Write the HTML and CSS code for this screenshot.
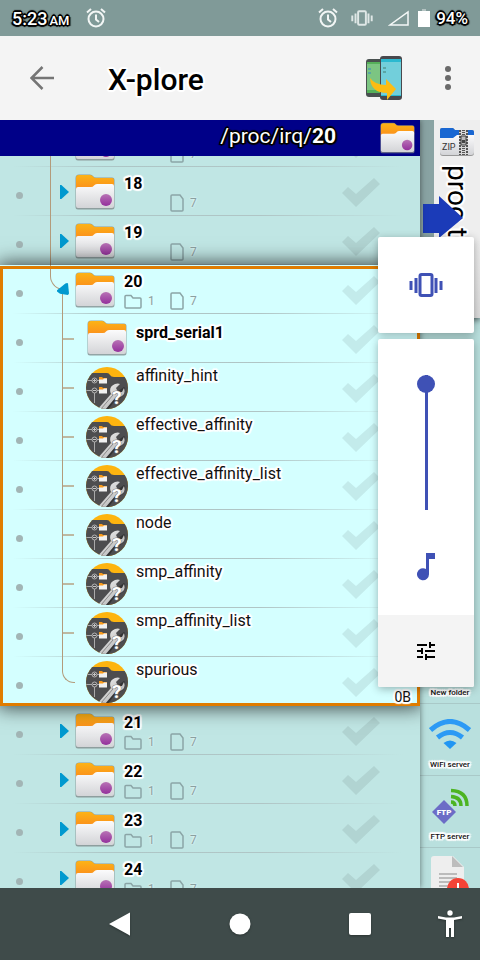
FILE: index.html
```html
<!DOCTYPE html>
<html lang="en">
<head>
<meta charset="utf-8">
<meta name="viewport" content="width=device-width, initial-scale=1">
<title>X-plore</title>
<link rel="stylesheet" href="styles.css">
</head>
<body>
<svg class="sprite" aria-hidden="true">
  <defs>
    <linearGradient id="g-orange" x1="0" y1="0" x2="0" y2="1"><stop offset="0" stop-color="#fcb316"/><stop offset="1" stop-color="#fb8c1c"/></linearGradient>
    <linearGradient id="g-paper" x1="0" y1="0" x2="0" y2="1"><stop offset="0" stop-color="#fbfbfc"/><stop offset="1" stop-color="#d3d4d7"/></linearGradient>
    <linearGradient id="g-purple" x1="0" y1="0" x2="0" y2="1"><stop offset="0" stop-color="#b873b5"/><stop offset="1" stop-color="#94309c"/></linearGradient>
    <linearGradient id="g-wrench" x1="0" y1="0" x2="1" y2="1"><stop offset="0" stop-color="#fafafa"/><stop offset="1" stop-color="#a5a5a5"/></linearGradient>
    <clipPath id="c-round"><circle cx="21" cy="21" r="21"/></clipPath>
  </defs>
  <symbol id="folder" viewBox="0 0 40 36">
    <path d="M.5 34V4Q.5 .5 4 .5H15Q17 .5 18 2Q19 3.500 21 3.500H37Q39.500 3.500 39.500 6V33Q39.500 35.500 37 35.500H3Q.5 35.500 .5 33Z" fill="#7d8587" opacity=".75"/>
    <path d="M1 16V4Q1 1 4 1H15Q17 1 18 2.500Q19 4 21 4H37Q39 4 39 6V14Z" fill="url(#g-orange)"/>
    <path d="M1 15Q1 13 3 13H16Q18 13 19 11.500Q20 10 22 10H37Q39 10 39 12V32Q39 34 37 34H3Q1 34 1 32Z" fill="url(#g-paper)"/>
    <circle cx="31" cy="26" r="6" fill="url(#g-purple)"/>
  </symbol>
  <symbol id="sysfile" viewBox="0 0 42 42">
    <g clip-path="url(#c-round)">
      <rect width="42" height="42" fill="#fdb40f"/>
      <path d="M0 6H21Q23 6 24 8Q25 10 28 10H42V42H0Z" fill="#4d4d4f"/>
      <path d="M0 13.500H13M0 23.500H13M8.500 26V36" stroke="#a9a9a9" fill="none"/>
      <circle cx="8.500" cy="13.500" r="2.500" fill="#4d4d4f" stroke="#b5b5b5"/>
      <circle cx="8.500" cy="23.500" r="2.500" fill="#4d4d4f" stroke="#b5b5b5"/>
      <path d="M7 13.500H10M8.500 12V15M7 23.500H10" stroke="#c5c5c5"/>
      <path d="M13 10H16L17 11H21V13H13ZM13 20H16L17 21H21V23H13Z" fill="#f99b1c"/>
      <path d="M13 12.500H17L18 11.500H21V16.500H13ZM13 22.500H17L18 21.500H21V26.500H13Z" fill="#f1f1f1"/>
      <path d="M38 20L39 21Q40 28 34 31L30 32L22 43H15L28 27Z" fill="#242424" opacity=".6"/>
      <path d="M11 43L25 27Q22 20 29 17Q32 16 34 17L30 21L32 25H36L38 21Q40 27 36 29Q33 31 30 30L19 43Z" fill="url(#g-wrench)"/>
      <path d="M15 42L27 28" stroke="#888"/>
      <text x="26" y="37" font-family="Roboto, sans-serif" font-size="19" font-weight="700" fill="#fff" stroke="#777" stroke-width="1" paint-order="stroke">?</text>
    </g>
  </symbol>
  <symbol id="check" viewBox="0 0 40 32"><path d="M1 17L7 11L15 18L33 2L39 8L15 31Z" fill="#000" opacity=".08"/></symbol>
  <symbol id="mini-folder" viewBox="0 0 18 15"><path d="M1 2.500Q1 1.500 2 1.500H7L9 4H16Q17 4 17 5V13Q17 14 16 14H2Q1 14 1 13Z"/></symbol>
  <symbol id="mini-file" viewBox="0 0 14 18"><path d="M1 2Q1 1 2 1H10L13 5V16Q13 17 12 17H2Q1 17 1 16Z"/></symbol>
  <symbol id="alarm" viewBox="0 0 20 20">
    <circle cx="10" cy="11" r="7.500" fill="none" stroke="#f2f6f5" stroke-width="2"/>
    <path d="M10 6.500V11.500L13 14M1 4.500L5 1M19 4.500L15 1" fill="none" stroke="#f2f6f5" stroke-width="2"/>
  </symbol>
  <symbol id="vibrate" viewBox="0 0 34 24">
    <rect x="11" y="1.500" width="12" height="21" rx="1.500" fill="none" stroke="currentColor" stroke-width="3"/>
    <path d="M7 5V20M27 5V20" stroke="currentColor" stroke-width="3"/>
    <path d="M2 8V17M32 8V17" stroke="currentColor" stroke-width="3"/>
  </symbol>
</svg>

<header class="status">
  <span class="clock">5:23<small>AM</small></span>
  <svg class="ic20"><use href="#alarm"/></svg>
  <span class="grow"></span>
  <svg class="ic20"><use href="#alarm"/></svg>
  <svg class="status-vibrate"><use href="#vibrate"/></svg>
  <svg class="signal" viewBox="0 0 21 16"><path d="M2 15H20V2Z" fill="none" stroke="#f4f8f7" stroke-width="1.500"/></svg>
  <svg class="battery" viewBox="0 0 12 18"><path d="M4 0H8V2H4Z" fill="#b4c3c2"/><path d="M0 2H12V18H0Z" fill="#fff"/></svg>
  <span class="percent">94%</span>
</header>

<div class="toolbar">
  <button class="back" aria-label="Back"><svg viewBox="0 0 24 24"><path d="M24 12H2M12.500 1L1.500 12L12.500 23" fill="none" stroke="#757575" stroke-width="2.500"/></svg></button>
  <h1>X-plore</h1>
  <button class="swap" aria-label="Transfer"><svg viewBox="0 0 38 46">
    <rect x="1" y="4" width="20" height="38" rx="3" fill="#48504f"/><rect x="2" y="7" width="18" height="31" fill="#55b05a"/><rect x="2" y="9" width="18" height="26" fill="#7cc582"/>
    <rect x="15" y="1" width="22" height="44" rx="3" fill="#48484d"/><rect x="16" y="4" width="20" height="37" fill="#2bb9d0"/><rect x="16" y="7" width="20" height="33" fill="#72cfdb"/>
    <path d="M3 14H6M3 18H6M18 13H21M18 17H21" stroke="#5aa6a5" stroke-width="2"/>
    <path d="M5 23Q10 30 21 30V24L31 34L22 45V38Q6 38 5 23Z" fill="#fdbc12"/>
  </svg></button>
  <button class="more" aria-label="More"><svg viewBox="0 0 6 24"><circle cx="3" cy="3" r="3"/><circle cx="3" cy="12" r="3"/><circle cx="3" cy="21" r="3"/></svg></button>
</div>

<main class="content">
  <section class="pane">
    <div class="path"><span>/proc/irq/<b>20</b></span><svg class="path-icon"><use href="#folder"/></svg></div>
    <div class="viewport">
      <ul class="list" id="list"></ul>
    </div>
  </section>

  <aside class="side">
    <div class="tab">
      <svg class="zip" viewBox="0 0 34 30">
        <path d="M0 26V3Q0 1 2 1H13L15 3H32Q34 3 34 5V26Q34 29 31 29H3Q0 29 0 26Z" fill="#999"/>
        <path d="M0 14V3Q0 1 2 1H13L15 3H32Q34 3 34 5V14Z" fill="#1967d2"/>
        <path d="M0 11H13L17 8H34V25Q34 28 31 28H3Q0 28 0 25Z" fill="url(#g-paper)"/>
        <path d="M19 3H28V28H19Z" fill="#d8d8d8"/>
        <path d="M20 3V28M27 3V28" stroke="#555" stroke-width="2" stroke-dasharray="2 1"/>
        <path d="M23.500 3V28" stroke="#555" stroke-width="3" stroke-dasharray="1 1"/>
        <path d="M21 9H26V18H21Z" fill="#bbb" stroke="#444"/><path d="M22 13H25V16H22Z" fill="#444"/>
        <text x="2" y="23" font-family="Roboto, sans-serif" font-size="9" fill="#333">ZIP</text>
      </svg>
      <span class="tab-name">proc.tar</span>
      <svg class="arrow" viewBox="0 0 40 42"><path d="M0 8H16V0L40 22L16 42V37H0Z" fill="#1b3bb8"/></svg>
    </div>
    <div class="tools">
      <button class="tool">New folder</button>
      <button class="tool"><svg class="wifi" viewBox="0 0 42 30"><path d="M21 30L14.500 24Q21 19 27.500 24Z" fill="#2196f3"/><path d="M8.500 18.500Q21 8.500 33.500 18.500M1.500 11Q21 -6 40.500 11" fill="none" stroke="#2c9af5" stroke-width="5"/></svg>WiFi server</button>
      <button class="tool"><svg class="ftp" viewBox="0 0 38 36">
        <path d="M13 12L25 24L13 36L1 24Z" fill="#6c6cc6"/>
        <path d="M20 14Q24 14 24 18M20 8.500Q30 9 30 18M20 2.500Q36 3 36 18" fill="none" stroke="#4cb422" stroke-width="3.500"/>
        <text x="13" y="27" text-anchor="middle" font-family="Roboto, sans-serif" font-size="8" font-weight="900" fill="#fff">FTP</text>
      </svg>FTP server</button>
      <button class="tool" aria-label="Log"><svg class="log" viewBox="0 0 38 48"><path d="M3 0H22L33 11V48H3Q0 48 0 45V3Q0 0 3 0Z" fill="#eee"/><path d="M21 0L32 11H21Z" fill="#bdbdbd"/><path d="M8 18H26M8 22H26M8 26H26M8 30H18" stroke="#bbb" stroke-width="2"/><circle cx="27" cy="33" r="11" fill="#f44336"/><path d="M27 27V34M27 37V40" stroke="#fff" stroke-width="2"/></svg></button>
    </div>
  </aside>
</main>

<nav class="nav">
  <button aria-label="Back"><svg viewBox="0 0 24 24"><path d="M1 12L21 1Q22 0 22 1V23Q22 24 21 23Z"/></svg></button>
  <button aria-label="Home"><svg viewBox="0 0 24 24"><circle cx="12" cy="12" r="10.500"/></svg></button>
  <button aria-label="Recent"><svg viewBox="0 0 24 24"><rect x="1" y="1" width="22" height="22" rx="2"/></svg></button>
  <button class="access" aria-label="Accessibility"><svg viewBox="0 0 24 28"><circle cx="12" cy="3" r="2.700"/><path d="M0 6L8 7.500H16L24 6V8.500L16 10V27H13V18H11V27H8V10L0 8.500Z"/></svg></button>
</nav>

<div class="volume">
  <button class="mode" aria-label="Vibrate"><svg><use href="#vibrate"/></svg></button>
  <div class="sheet">
    <input class="slider" type="range" min="0" max="100" value="100" aria-label="Media volume">
    <svg class="note" viewBox="0 0 18 28"><path d="M9 0H18V6H12V21A6 6 0 1 1 9 16Z"/></svg>
    <button class="settings" aria-label="Settings"><svg viewBox="0 0 18 18"><path d="M0 3H10M13 3H18M13 0V6M0 9H6M5 6V12M8 9H18M0 15H6M9 12V18M9 15H18" fill="none" stroke="#000" stroke-width="2"/></svg></button>
  </div>
</div>
<script src="list.js"></script>
</body>
</html>
```
FILE: list.js
```js
const icon = (name, cls) => `<svg class="${cls}"><use href="#${name}"/></svg>`;
const tail = icon("check", "check");

function folderRow(name, dirs, state) {
  const sub = dirs ? `${icon("mini-folder", "mini-folder")}<span>${dirs}</span>` : "";
  return `<li class="row top ${state}"><i class="dot"></i><i class="twist"></i>${icon("folder", "folder")}
    <div class="label"><b>${name}</b><div class="counts"><div class="dirs">${sub}</div>${icon("mini-file", "mini-file")}<span>7</span></div></div>${tail}</li>`;
}

function childRow(name, isFolder) {
  const pic = isFolder ? icon("folder", "folder") : icon("sysfile", "sysfile");
  return `<li class="row child${isFolder ? " is-folder" : ""}"><i class="dot"></i><div class="pic">${pic}</div>
    <div class="label">${name}</div>${tail}</li>`;
}

const files = ["affinity_hint", "effective_affinity", "effective_affinity_list", "node", "smp_affinity", "smp_affinity_list", "spurious"];

document.getElementById("list").innerHTML =
  ["17", "18", "19"].map(n => folderRow(n, 0, "before")).join("") +
  `<li class="group"><ul class="list">${folderRow("20", 1, "open")}${childRow("sprd_serial1", true)}${files.map(f => childRow(f, false)).join("")}</ul><span class="size">0B</span></li>` +
  ["21", "22", "23", "24"].map(n => folderRow(n, 1, "")).join("");
```
FILE: styles.css
```css
* { box-sizing: border-box; }
:root {
  --halo: 1px 0 1px #fff, -1px 0 1px #fff, 0 1px 1px #fff, 0 -1px 1px #fff, 2px 1px 1px #fff, -2px 1px 1px #fff, 2px -1px 1px #fff, -2px -1px 1px #fff, 1px 2px 1px #fff, -1px 2px 1px #fff, 1px -2px 1px #fff, -1px -2px 1px #fff;
  --dark-halo: 1px 0 0 #000, -1px 0 0 #000, 0 1px 0 #000, 0 -1px 0 #000, 1px 1px 0 #000, -1px -1px 0 #000, 1px -1px 0 #000, -1px 1px 0 #000, 2px 1px 1px #000, -2px 1px 1px #000, 0 2px 1px #000, 0 -2px 1px #000;
}
body {
  margin: 0;
  height: 100vh;
  display: flex;
  flex-direction: column;
  position: relative;
  overflow: hidden;
  font-family: Roboto, "Liberation Sans", sans-serif;
  color: #111;
}
button { border: 0; padding: 0; background: none; font: inherit; color: inherit; }
ul { list-style: none; margin: 0; padding: 0; }
svg { display: block; flex: none; }
svg text { text-shadow: none; }
.sprite { position: absolute; width: 0; height: 0; }
.grow { flex: 1; }

.status {
  flex: 0 0 36px;
  display: flex;
  align-items: center;
  padding: 0 12px;
  background: #809a98;
  color: #fff;
}
.clock, .percent { font-size: 18px; font-weight: 500; text-shadow: var(--dark-halo); }
.clock { display: flex; align-items: baseline; gap: 2px; width: 74px; }
.clock small { font-size: 13px; }
.ic20 { width: 20px; height: 20px; }
.status-vibrate { width: 22px; height: 16px; margin: 0 15px 0 13px; color: #dfe7e6; }
.signal { width: 21px; height: 16px; margin-right: 9px; }
.battery { width: 12px; height: 18px; margin-right: 6px; }
.percent { font-size: 17px; }

.toolbar {
  flex: 0 0 84px;
  display: flex;
  align-items: center;
  padding: 0 30px;
  background: #f4f4f4;
  position: relative;
  z-index: 2;
}
.back svg { width: 24px; height: 24px; }
.toolbar h1 {
  flex: 1;
  margin: 2px 0 0 54px;
  font-size: 30px;
  font-weight: 500;
  color: #000;
  text-shadow: var(--halo);
}
.swap { margin-right: 42px; }
.swap svg { width: 38px; height: 46px; }
.more svg { width: 6px; height: 24px; margin-right: -1px; fill: #6a6a6a; }

.content { flex: 1; min-height: 0; display: flex; }
.pane {
  flex: 1;
  min-width: 0;
  display: flex;
  flex-direction: column;
  background: #c0e6e4;
  position: relative;
  z-index: 1;
  box-shadow: 0 0 6px rgba(0, 0, 0, .5);
}
.path {
  flex: 0 0 36px;
  display: flex;
  align-items: center;
  justify-content: flex-end;
  gap: 44px;
  padding-right: 5px;
  background: #000088;
  color: #fff;
  font-size: 21px;
  text-shadow: var(--dark-halo);
}
.path span { padding-bottom: 4px; }
.path-icon { width: 35px; height: 32px; }
.viewport { flex: 1; min-height: 0; overflow: hidden; }
.viewport > .list { margin-top: -38px; }

.row {
  position: relative;
  height: 49px;
  display: flex;
  padding: 0 39px 0 16px;
  background: linear-gradient(90deg, transparent 3%, #adc6c6 25%, #b0c5c5 62%, transparent 96%) bottom / 100% 1px no-repeat;
}
.row > .check { width: 40px; height: 32px; margin-top: 9px; }
.dot { width: 7px; height: 7px; border-radius: 50%; background: #a2b5b5; margin-top: 25px; }
.twist {
  width: 9px;
  height: 14px;
  margin: 18px 6px 0 37px;
  background: #0099cf;
  clip-path: polygon(0 0, 15% 0, 100% 50%, 15% 100%, 0 100%);
}
.folder { width: 40px; height: 36px; margin-top: 7px; }
.label { flex: 1; margin-left: 9px; padding-top: 7px; font-size: 16px; line-height: 20px; text-shadow: var(--halo); white-space: nowrap; }
.top b { display: block; color: #000; }
.counts { display: flex; align-items: center; height: 18px; font-size: 12px; color: #8aa0a0; }
.counts svg { fill: none; stroke: #8ba5a6; stroke-width: 1.500; }
.dirs { width: 46px; display: flex; align-items: center; }
.counts span { margin-left: 6px; text-shadow: 0 0 2px #e8fafa, 0 0 2px #e8fafa; }
.mini-folder { width: 18px; height: 15px; }
.mini-file { width: 14px; height: 18px; }

.pic { width: 42px; margin-left: 63px; }
.child .folder { margin: 6px 0 0 1px; }
.sysfile { width: 42px; height: 42px; margin-top: 4px; }
.child .label { margin-left: 8px; padding-top: 3px; }
.child.is-folder .label { padding-top: 9px; font-weight: 700; color: #000; }

.row::before, .row::after { position: absolute; border: 0 solid #b39b7b; }
.before::before { content: ""; left: 50px; top: 0; bottom: 0; border-left-width: 1px; }
.open::before { content: ""; left: 50px; top: 0; width: 14px; height: 24px; border-left-width: 1px; border-bottom-width: 1px; border-bottom-left-radius: 14px; }
.open::after { content: ""; left: 62px; top: 28px; bottom: 0; border-left-width: 1px; }
.child::before { content: ""; left: 62px; top: 0; bottom: 0; border-left-width: 1px; }
.child::after { content: ""; left: 63px; top: 24px; width: 11px; border-top-width: 2px; border-color: #bdb9a2; }
.child:last-child::before { bottom: auto; width: 12px; height: 25px; border-bottom-width: 1px; border-bottom-left-radius: 12px; }
.child:last-child::after { content: none; }
.open .twist {
  width: 12px;
  height: 12px;
  margin: 18px 6px 0 34px;
  clip-path: polygon(0 60%, 70% 5%, 85% 0, 92% 5%, 100% 88%, 92% 100%, 25% 90%, 0 70%);
  z-index: 1;
}

.group { position: relative; z-index: 1; background: #d4ffff; box-shadow: 0 0 18px 2px rgba(0, 0, 0, .7); }
.group::after { content: ""; position: absolute; inset: 1px 0 0; border: 3px solid #e07c00; }
.size { position: absolute; right: 9px; bottom: 0; z-index: 1; font-size: 14px; line-height: 17px; text-shadow: var(--halo); }

.side { flex: 0 0 60px; display: flex; flex-direction: column; background: #b9e0de; overflow: hidden; }
.tab {
  flex: 0 0 198px;
  position: relative;
  display: flex;
  flex-direction: column;
  align-items: center;
  border-left: 14px solid #89a3a3;
  background: linear-gradient(#eeeeee 60%, #dcdcdc);
  box-shadow: 0 2px 6px rgba(0, 0, 0, .6);
}
.zip { width: 34px; height: 30px; margin: 7px 0 8px; }
.tab-name { writing-mode: vertical-rl; font-size: 28px; line-height: 30px; color: #000; text-shadow: var(--halo); }
.arrow { position: absolute; left: -11px; top: 76px; width: 40px; height: 42px; }
.tools { flex: 1; min-height: 0; display: flex; flex-direction: column; justify-content: flex-end; margin-bottom: -32px; }
.tool {
  flex: 0 0 72px;
  display: flex;
  flex-direction: column;
  align-items: center;
  justify-content: flex-end;
  padding-bottom: 3px;
  border-bottom: 1px solid #a9c9c8;
  font-size: 8px;
  font-weight: 500;
  line-height: 14px;
  text-shadow: var(--halo);
  white-space: nowrap;
}
.wifi { width: 42px; height: 30px; margin-bottom: 9px; }
.ftp { width: 38px; height: 36px; margin-bottom: 6px; }
.log { width: 38px; height: 48px; margin-bottom: 12px; }

.nav { flex: 0 0 72px; display: flex; padding-left: 60px; background: #3f4b4a; position: relative; z-index: 2; }
.nav button { flex: 1; display: flex; align-items: center; justify-content: center; }
.nav .access { flex: 0 0 60px; }
.nav svg { width: 24px; height: 24px; fill: #fff; filter: drop-shadow(0 1px 1px #2a3332); }
.nav .access svg { height: 28px; }

.volume {
  position: absolute;
  z-index: 3;
  top: 237px;
  right: 6px;
  width: 96px;
  display: flex;
  flex-direction: column;
  gap: 6px;
}
.mode, .sheet { background: #fff; border-radius: 2px; box-shadow: 0 2px 8px rgba(0, 0, 0, .3); }
.mode { height: 96px; display: flex; align-items: center; justify-content: center; color: #3f51b5; }
.mode svg { width: 34px; height: 24px; }
.sheet { display: flex; flex-direction: column; align-items: center; padding-top: 36px; }
.slider {
  appearance: none;
  writing-mode: vertical-lr;
  direction: rtl;
  width: 18px;
  height: 135px;
  margin: 0;
  background: linear-gradient(#3f51b5, #3f51b5) center / 3px 100% no-repeat;
}
.slider::-webkit-slider-thumb { appearance: none; width: 18px; height: 18px; border-radius: 50%; background: #3f51b5; }
.note { width: 18px; height: 28px; margin: 43px 0 34px; fill: #3f51b5; }
.settings { width: 100%; height: 72px; display: flex; align-items: center; justify-content: center; background: #f4f4f4; border-radius: 0 0 2px 2px; }
.settings svg { width: 18px; height: 18px; }
```
